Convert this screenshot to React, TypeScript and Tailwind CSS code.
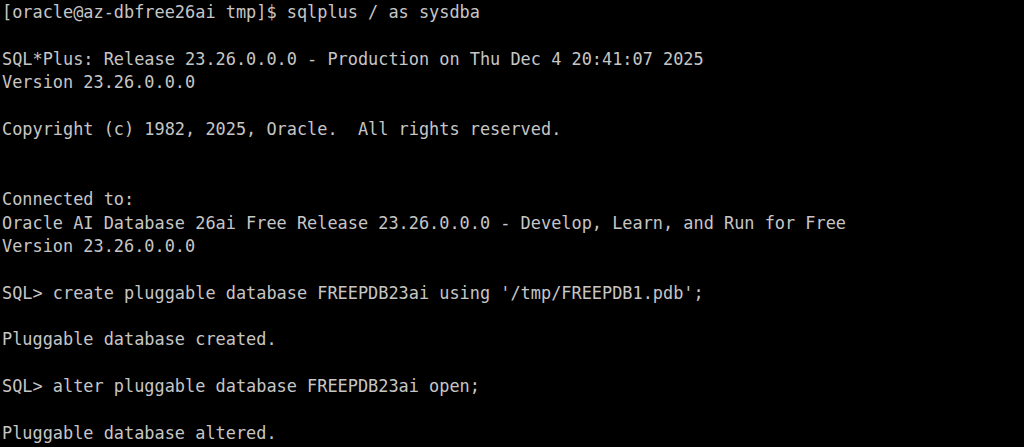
import React from "react";

const lines: string[] = [
  "[oracle@az-dbfree26ai tmp]$ sqlplus / as sysdba",
  "",
  "SQL*Plus: Release 23.26.0.0.0 - Production on Thu Dec 4 20:41:07 2025",
  "Version 23.26.0.0.0",
  "",
  "Copyright (c) 1982, 2025, Oracle.  All rights reserved.",
  "",
  "",
  "Connected to:",
  "Oracle AI Database 26ai Free Release 23.26.0.0.0 - Develop, Learn, and Run for Free",
  "Version 23.26.0.0.0",
  "",
  "SQL> create pluggable database FREEPDB23ai using '/tmp/FREEPDB1.pdb';",
  "",
  "Pluggable database created.",
  "",
  "SQL> alter pluggable database FREEPDB23ai open;",
  "",
  "Pluggable database altered.",
];

export default function App() {
  return (
    <div className="h-[447px] w-[1024px] overflow-hidden bg-black pl-[2px] pt-[1px]">
      <pre
        className="m-0 text-[16.9px] leading-[23.4px] text-[#c6c6c6]"
        style={{ fontFamily: "'DejaVu Sans Mono', 'Liberation Mono', monospace" }}
      >
        {lines.map((l, i) => (
          <div key={i} className="h-[23.4px] whitespace-pre">
            {l}
          </div>
        ))}
      </pre>
    </div>
  );
}
